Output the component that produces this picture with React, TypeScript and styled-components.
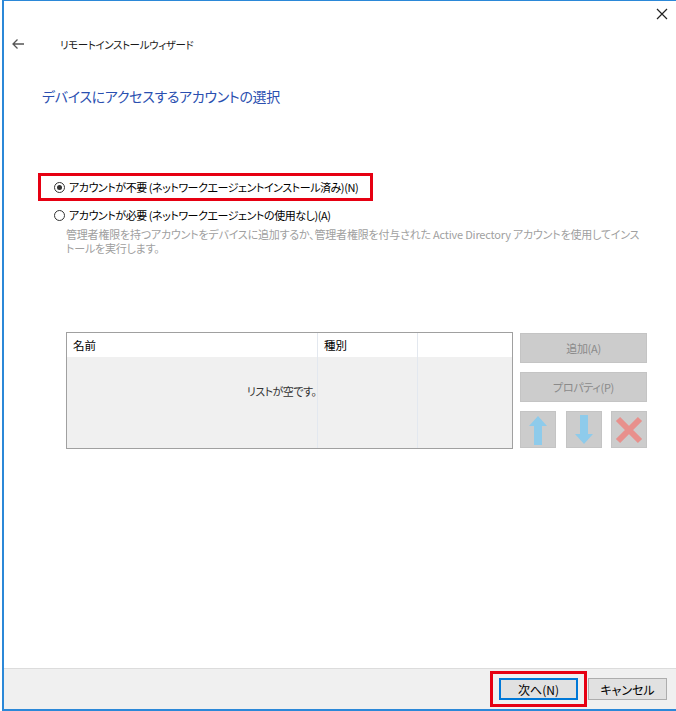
import React from "react";
import styled, { createGlobalStyle } from "styled-components";

const Global = createGlobalStyle`
  html, body { margin: 0; padding: 0; background: #ffffff; }
  body {
    font-family: "Noto Sans CJK JP", "Noto Sans", sans-serif;
    font-feature-settings: "palt";
    color: #000;
  }
`;

const Window = styled.div`
  margin-left: 2px;
  width: 672px;
  height: 708px;
  border-left: 2px solid #2b88d8;
  border-top: 1px solid #2b88d8;
  border-bottom: 2px solid #2b88d8;
  display: flex;
  flex-direction: column;
  background: #fff;
`;

const Main = styled.div`
  flex: 1;
  display: flex;
  flex-direction: column;
`;

const TitleBar = styled.div`
  height: 29px;
  display: flex;
  justify-content: flex-end;
  align-items: flex-start;
  padding-right: 8px;
`;

const CloseBtn = styled.div`
  width: 12px;
  height: 12px;
  margin-top: 7px;
  display: flex;
`;

const NavRow = styled.div`
  height: 28px;
  display: flex;
  align-items: center;
  padding-left: 7px;
`;

const BackArrow = styled.div`
  width: 14px;
  height: 12px;
  display: flex;
  margin-right: 35px;
`;

const WizardTitle = styled.div`
  font-size: 10.5px;
  letter-spacing: -0.4px;
  color: #1a1a1a;
`;

const Heading = styled.h1`
  margin: 28px 0 0 38px;
  font-size: 14px;
  line-height: 20px;
  font-weight: 400;
  letter-spacing: -0.3px;
  color: #2a4fb0;
`;

const Options = styled.div`
  margin: 67px 0 0 34px;
  display: flex;
  flex-direction: column;
`;

const Highlight = styled.div`
  align-self: flex-start;
  border: 3px solid #e60012;
  padding: 2px 10px 2px 13px;
  width: 335px;
  box-sizing: border-box;
  height: 28px;
  display: flex;
  align-items: center;
`;

const RadioRow = styled.div<{ $indent?: number }>`
  display: flex;
  align-items: center;
  gap: 4px;
  height: 20px;
  padding-left: ${(p) => p.$indent ?? 0}px;
  font-size: 11px;
  white-space: nowrap;
  letter-spacing: -0.45px;
`;

const Radio = styled.span<{ $checked?: boolean }>`
  width: 11px;
  height: 11px;
  box-sizing: border-box;
  border-radius: 50%;
  border: 1px solid #333;
  display: inline-flex;
  align-items: center;
  justify-content: center;
  flex: none;
  &::after {
    content: "";
    width: 5px;
    height: 5px;
    border-radius: 50%;
    background: ${(p) => (p.$checked ? "#333" : "transparent")};
  }
`;

const Description = styled.p`
  margin: 2px 0 0 28px;
  width: 576px;
  font-size: 11px;
  line-height: 14px;
  color: #a0a0a0;
  letter-spacing: -0.2px;
`;

const ListArea = styled.div`
  margin: 77px 0 0 62px;
  display: flex;
  gap: 7px;
  align-items: flex-start;
`;

const Table = styled.div`
  position: relative;
  width: 447px;
  height: 117px;
  box-sizing: border-box;
  border: 1px solid #a0a0a0;
  display: grid;
  grid-template-columns: 251px 100px 1fr;
  grid-template-rows: 24px 1fr;
  background: #f0f0f0;
`;

const HeadCell = styled.div<{ $last?: boolean }>`
  background: #fff;
  font-size: 11.5px;
  display: flex;
  align-items: center;
  padding-left: 6px;
  border-right: ${(p) => (p.$last ? "none" : "1px solid #e3e8ef")};
`;

const BodyCell = styled.div<{ $last?: boolean }>`
  border-right: ${(p) => (p.$last ? "none" : "1px solid #e3e8ef")};
`;

const EmptyMsg = styled.div`
  position: absolute;
  inset: 0;
  display: flex;
  align-items: center;
  justify-content: center;
  font-size: 11px;
  letter-spacing: -0.5px;
  color: #333;
  padding-right: 16px;
  pointer-events: none;
`;

const SideButtons = styled.div`
  width: 127px;
  display: flex;
  flex-direction: column;
  gap: 9px;
  margin-top: 1px;
`;

const GrayButton = styled.div`
  height: 30px;
  box-sizing: border-box;
  background: #cccccc;
  border: 1px solid #c4c4c4;
  color: #8a8a8a;
  font-size: 11px;
  letter-spacing: -0.3px;
  display: flex;
  align-items: center;
  justify-content: center;
`;

const IconRow = styled.div`
  display: flex;
  justify-content: space-between;
`;

const IconButton = styled.div`
  width: 36px;
  height: 37px;
  box-sizing: border-box;
  background: #cccccc;
  border: 1px solid #c4c4c4;
  display: flex;
  align-items: center;
  justify-content: center;
`;

const Footer = styled.div`
  height: 38px;
  border-top: 1px solid #dcdcdc;
  background: #f0f0f0;
  display: flex;
  justify-content: flex-end;
  align-items: flex-start;
  padding: 2px 9px 0 0;
  gap: 1px;
`;

const FocusFrame = styled.div`
  border: 3px solid #e60012;
  padding: 4px 6px;
  display: flex;
`;

const DialogButton = styled.button<{ $focused?: boolean }>`
  width: 79px;
  height: 22px;
  box-sizing: border-box;
  margin-top: ${(p) => (p.$focused ? 0 : 7)}px;
  font-family: "Noto Sans CJK JP", sans-serif;
  font-feature-settings: "palt";
  font-size: 12px;
  color: #000;
  background: #e1e1e1;
  border: ${(p) => (p.$focused ? "2px solid #0078d7" : "1px solid #adadad")};
  padding: 0;
  display: flex;
  align-items: center;
  justify-content: center;
`;

export default function App() {
  return (
    <>
      <Global />
      <Window>
        <Main>
          <TitleBar>
            <CloseBtn>
              <svg width="12" height="12" viewBox="0 0 12 12">
                <path d="M1 1 L11 11 M11 1 L1 11" stroke="#222" strokeWidth="1.2" />
              </svg>
            </CloseBtn>
          </TitleBar>
          <NavRow>
            <BackArrow>
              <svg width="14" height="12" viewBox="0 0 14 12">
                <path d="M13 6 H2 M6.5 1.5 L2 6 L6.5 10.5" stroke="#555" strokeWidth="1.3" fill="none" />
              </svg>
            </BackArrow>
            <WizardTitle>リモートインストールウィザード</WizardTitle>
          </NavRow>
          <Heading>デバイスにアクセスするアカウントの選択</Heading>
          <Options>
            <Highlight>
              <RadioRow>
                <Radio $checked />
                アカウントが不要 (ネットワークエージェントインストール済み)(N)
              </RadioRow>
            </Highlight>
            <RadioRow $indent={16} style={{ marginTop: 4 }}>
              <Radio />
              アカウントが必要 (ネットワークエージェントの使用なし)(A)
            </RadioRow>
            <Description>
              管理者権限を持つアカウントをデバイスに追加するか、管理者権限を付与された Active Directory アカウントを使用してインストールを実行します。
            </Description>
          </Options>
          <ListArea>
            <Table>
              <HeadCell>名前</HeadCell>
              <HeadCell>種別</HeadCell>
              <HeadCell $last />
              <BodyCell />
              <BodyCell />
              <BodyCell $last />
              <EmptyMsg>リストが空です。</EmptyMsg>
            </Table>
            <SideButtons>
              <GrayButton>追加(A)</GrayButton>
              <GrayButton>プロパティ(P)</GrayButton>
              <IconRow>
                <IconButton>
                  <svg width="20" height="30" viewBox="0 0 20 30">
                    <polygon points="10,1 19,11 14,11 14,30 6,30 6,11 1,11" fill="#8ecbeb" />
                  </svg>
                </IconButton>
                <IconButton>
                  <svg width="20" height="30" viewBox="0 0 20 30">
                    <polygon points="10,29 19,19 14,19 14,0 6,0 6,19 1,19" fill="#8ecbeb" />
                  </svg>
                </IconButton>
                <IconButton>
                  <svg width="28" height="28" viewBox="0 0 28 28">
                    <path d="M3 3 L25 25 M25 3 L3 25" stroke="#e8908c" strokeWidth="6" />
                  </svg>
                </IconButton>
              </IconRow>
            </SideButtons>
          </ListArea>
        </Main>
        <Footer>
          <FocusFrame>
            <DialogButton $focused>次へ(N)</DialogButton>
          </FocusFrame>
          <DialogButton>キャンセル</DialogButton>
        </Footer>
      </Window>
    </>
  );
}
